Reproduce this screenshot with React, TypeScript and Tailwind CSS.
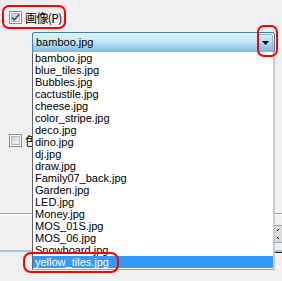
const files = [
  'bamboo.jpg',
  'blue_tiles.jpg',
  'Bubbles.jpg',
  'cactustile.jpg',
  'cheese.jpg',
  'color_stripe.jpg',
  'deco.jpg',
  'dino.jpg',
  'dj.jpg',
  'draw.jpg',
  'Family07_back.jpg',
  'Garden.jpg',
  'LED.jpg',
  'Money.jpg',
  'MOS_01S.jpg',
  'MOS_06.jpg',
  'Snowboard.jpg',
  'yellow_tiles.jpg',
];

function CheckBox({ checked }: { checked: boolean }) {
  return (
    <svg width="13" height="13" viewBox="0 0 13 13" className="shrink-0">
      <defs>
        <linearGradient id={checked ? 'cbOn' : 'cbOff'} x1="0" y1="0" x2="1" y2="1">
          <stop offset="0" stopColor="#cbcfd5" />
          <stop offset="1" stopColor="#f7f7f7" />
        </linearGradient>
      </defs>
      <rect x="0.5" y="0.5" width="12" height="12" fill="#ffffff" stroke="#8e8f8f" />
      <rect x="2.5" y="2.5" width="8" height="8" fill={`url(#${checked ? 'cbOn' : 'cbOff'})`} stroke="#b4b8bd" />
      {checked && <path d="M3 6.5 L5.3 9 L10 3.5" fill="none" stroke="#3f5593" strokeWidth="1.8" />}
    </svg>
  );
}

export default function App() {
  return (
    <div
      className="relative w-[282px] h-[281px] overflow-hidden bg-[#f0f0f0] text-black flex flex-col"
      style={{ fontFamily: '"Liberation Sans", "Noto Sans CJK JP", sans-serif' }}
    >
      {/* checkbox row */}
      <div className="flex items-center gap-[3px] pt-[11px] pl-[9px] h-[24px]">
        <CheckBox checked />
        <span className="text-[12px] leading-[13px] tracking-[-0.6px]" style={{ fontFamily: '"Noto Sans CJK JP", sans-serif' }}>
          画像(P)
        </span>
      </div>

      {/* combobox */}
      <div className="ml-[32px] mt-[8px] w-[243px] h-[21px] flex items-stretch border border-[#3c7fb1] rounded-[2px] bg-gradient-to-b from-[#e6f4fc] via-[#bfe3f6] to-[#78bde3]">
        <span className="flex-1 pl-[3px] text-[11px] leading-[19px]">bamboo.jpg</span>
        <div className="w-[16px] m-[1px] flex items-center justify-center border border-[#8fb6d2] rounded-[2px] bg-gradient-to-b from-[#dcf0fb] to-[#7cbfe3]">
          <svg width="7" height="4" viewBox="0 0 7 4">
            <path d="M0 0 H7 L3.5 4 Z" fill="#000" />
          </svg>
        </div>
      </div>

      {/* underlying options, mostly hidden by the open list */}
      <div className="flex items-center gap-[3px] mt-[81px] pl-[9px] h-[13px] w-[32px] overflow-hidden">
        <CheckBox checked={false} />
        <span className="text-[12px] leading-[13px] w-[7px] overflow-hidden" style={{ fontFamily: '"Noto Sans CJK JP", sans-serif' }}>
          色
        </span>
      </div>
      <div className="mt-[66px] border-t border-[#a0a0a0] border-b border-b-[#ffffff]" />
      <div className="flex justify-end h-[35px]">
        <div className="w-[7px] flex flex-col">
          <div className="h-[11px] border-b border-[#a0a0a0]" />
          <div className="h-[16px] flex items-center pl-[1px] bg-[#dcdcdc]">
            <svg width="5" height="12" viewBox="0 0 5 12">
              <path d="M3 1 L1 3 M1 9 L3 11" stroke="#000" strokeWidth="1" fill="none" />
            </svg>
          </div>
          <div className="flex-1 border-t border-[#a0a0a0]" />
        </div>
      </div>
      <div className="border-t-2 border-[#a9c4de]" />
      <div className="flex justify-end">
        <div className="w-[7px] border-t border-[#202020]" />
      </div>

      {/* dropdown list */}
      <ul className="absolute left-[32px] top-[52px] w-[243px] h-[218px] bg-white border-l border-[#646464] border-r-2 border-r-[#c8c8d4] border-b border-b-[#a0a0a0]">
        {files.map((f, i) => (
          <li
            key={f}
            className={`h-[12px] pl-[2px] text-[11px] leading-[12px] whitespace-nowrap ${
              i === files.length - 1 ? 'bg-[#3399ff] text-white' : ''
            }`}
          >
            {f}
          </li>
        ))}
      </ul>

      {/* red annotations */}
      <div className="absolute left-[2px] top-[5px] w-[64px] h-[24px] border-[2.5px] border-[#ff0000] rounded-[7px]" />
      <div className="absolute left-[257px] top-[25px] w-[21px] h-[32px] border-[2.5px] border-[#ff0000] rounded-[7px]" />
      <div className="absolute left-[23px] top-[252px] w-[96px] h-[21px] border-[2.5px] border-[#ff0000] rounded-[8px]" />
    </div>
  );
}
